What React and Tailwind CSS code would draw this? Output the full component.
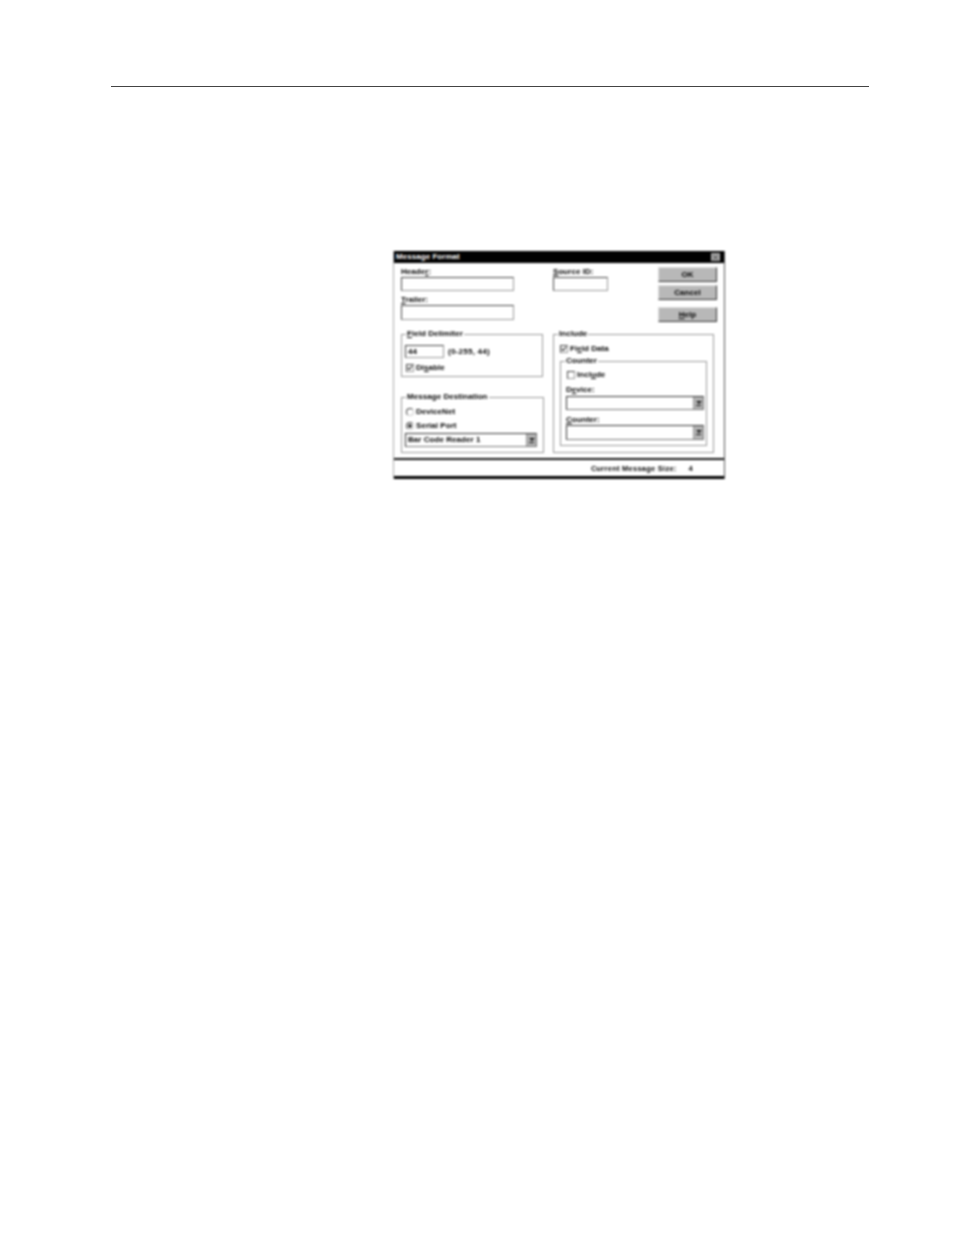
function Field({ className = '', children }) {
  return (
    <div className={`bg-white border border-t-[#444] border-l-[#444] border-r-[#999] border-b-[#999] ${className}`}>
      {children}
    </div>
  )
}

function Check({ checked }) {
  return (
    <span className="flex h-[8px] w-[8px] shrink-0 items-center justify-center border border-t-[#444] border-l-[#444] border-r-[#999] border-b-[#999] bg-white">
      {checked && (
        <svg viewBox="0 0 8 8" className="h-[8px] w-[8px]">
          <path d="M1 3.5 L3 6 L7 1" fill="none" stroke="#111" strokeWidth="1.4" />
        </svg>
      )}
    </span>
  )
}

function Radio({ checked }) {
  return (
    <span className="flex h-[8px] w-[8px] shrink-0 items-center justify-center rounded-full border border-t-[#444] border-l-[#444] border-r-[#ccc] border-b-[#ccc] bg-white">
      {checked && <span className="h-[4px] w-[4px] rounded-full bg-[#333]" />}
    </span>
  )
}

function Combo({ value, className = '' }) {
  return (
    <div className={`flex items-stretch border border-t-[#333] border-l-[#333] border-r-[#777] border-b-[#777] bg-white ${className}`}>
      <span className="flex-1 pl-[2px] leading-[12px]">{value}</span>
      <span className="flex w-[10px] flex-col items-center justify-center gap-[1px] border-l border-[#999] bg-[#b5b5b5]">
        <svg viewBox="0 0 6 3" className="h-[3px] w-[6px]">
          <path d="M0 0 H6 L3 3 Z" fill="#111" />
        </svg>
        <span className="h-[1px] w-[5px] bg-[#111]" />
      </span>
    </div>
  )
}

function Button({ children, className = '' }) {
  return (
    <div className={`flex h-[15px] w-[59px] items-center justify-center border border-t-[#ddd] border-l-[#ddd] border-r-[#333] border-b-[#333] bg-[#b8b8b8] ${className}`}>
      {children}
    </div>
  )
}

function Group({ title, className = '', inner = '', children }) {
  return (
    <fieldset className={`border border-[#999] ${className}`}>
      <legend className="ml-[4px] px-[1px] text-[8px] leading-[10px]">{title}</legend>
      <div className={inner}>{children}</div>
    </fieldset>
  )
}

export default function App() {
  return (
    <div className="h-[1235px] w-[954px] bg-white pt-[86px] font-['Liberation_Sans',Arial,sans-serif] text-[8px] font-bold tracking-[0.05px] text-black">
      <div className="ml-[111px] h-[1px] w-[758px] bg-[#444]" />

      <div className="ml-[393px] mt-[164px] flex h-[228px] w-[332px] flex-col border-r border-[#555] border-l border-l-[#aaa] blur-[0.8px]">
        <div className="flex h-[12px] items-center justify-between bg-black pl-[2px] pr-[4px] text-[8px] leading-[12px] text-white">
          <span>Message Format</span>
          <span className="flex h-[8px] w-[9px] items-center justify-center bg-[#aaa]">
            <svg viewBox="0 0 6 6" className="h-[5px] w-[5px]">
              <path d="M0 0 L6 6 M6 0 L0 6" stroke="#333" strokeWidth="1.2" />
            </svg>
          </span>
        </div>

        <div className="flex flex-1 flex-col pl-[7px]">
          <div className="flex h-[66px] pt-[4px]">
            <div className="w-[113px]">
              <div className="h-[10px] leading-[10px]">Heade<u>r</u>:</div>
              <Field className="h-[14px]" />
              <div className="mt-[4px] h-[10px] leading-[10px]"><u>T</u>railer:</div>
              <Field className="h-[15px]" />
            </div>
            <div className="ml-[39px] w-[55px]">
              <div className="h-[10px] leading-[10px]"><u>S</u>ource ID:</div>
              <Field className="h-[14px]" />
            </div>
            <div className="ml-[50px] flex flex-col">
              <Button className="border-[#111]">OK</Button>
              <Button className="mt-[3px]">Cancel</Button>
              <Button className="mt-[7px]"><u>H</u>elp</Button>
            </div>
          </div>

          <div className="flex">
            <div className="w-[143px]">
              <Group title={<><u>F</u>ield Delimiter</>} className="h-[48px] w-[142px]" inner="pl-[3px] pt-[6px]">
                <div className="flex items-center">
                  <Field className="h-[13px] w-[39px] pl-[2px] leading-[11px]">44</Field>
                  <span className="ml-[4px] tracking-[0.25px]">(0-255, 44)</span>
                </div>
                <div className="mt-[4px] flex items-center gap-[2px] pl-[1px]">
                  <Check checked />
                  <span>Di<u>s</u>able</span>
                </div>
              </Group>

              <Group title="Message Destination" className="mt-[15px] h-[61px]" inner="pl-[3px]">
                <div className="mt-[5px] flex items-center gap-[2px] pl-[1px] leading-[10px]">
                  <Radio />
                  <span>DeviceNet</span>
                </div>
                <div className="mt-[4px] flex items-center gap-[2px] pl-[1px] leading-[10px]">
                  <Radio checked />
                  <span>Serial Port</span>
                </div>
                <Combo value="Bar Code Reader 1" className="mt-[2px] h-[14px] w-[132px]" />
              </Group>
            </div>

            <Group title="Include" className="ml-[9px] h-[124px] w-[161px]" inner="pl-[6px]">
              <div className="mt-[5px] flex items-center gap-[2px] leading-[10px]">
                <Check checked />
                <span>Fi<u>e</u>ld Data</span>
              </div>
              <Group title="Counter" className="mt-[2px] h-[90px] w-[147px]" inner="pl-[5px]">
                <div className="mt-[4px] flex items-center gap-[2px] pl-[1px] leading-[10px]">
                  <Check />
                  <span>Incl<u>u</u>de</span>
                </div>
                <div className="mt-[5px] h-[10px] leading-[10px]">D<u>e</u>vice:</div>
                <Combo value="" className="mt-[1px] h-[14px] w-[138px]" />
                <div className="mt-[5px] h-[10px] leading-[10px]"><u>C</u>ounter:</div>
                <Combo value="" className="h-[15px] w-[138px]" />
              </Group>
            </Group>
          </div>
        </div>

        <div className="flex h-[18px] items-center justify-end border-t-2 border-[#111] pr-[31px] pt-[1px] text-[7.5px] tracking-[0.25px]">
          <span>Current Message Size:</span>
          <span className="ml-[12px]">4</span>
        </div>
        <div className="h-[3px] bg-black" />
      </div>
    </div>
  )
}
